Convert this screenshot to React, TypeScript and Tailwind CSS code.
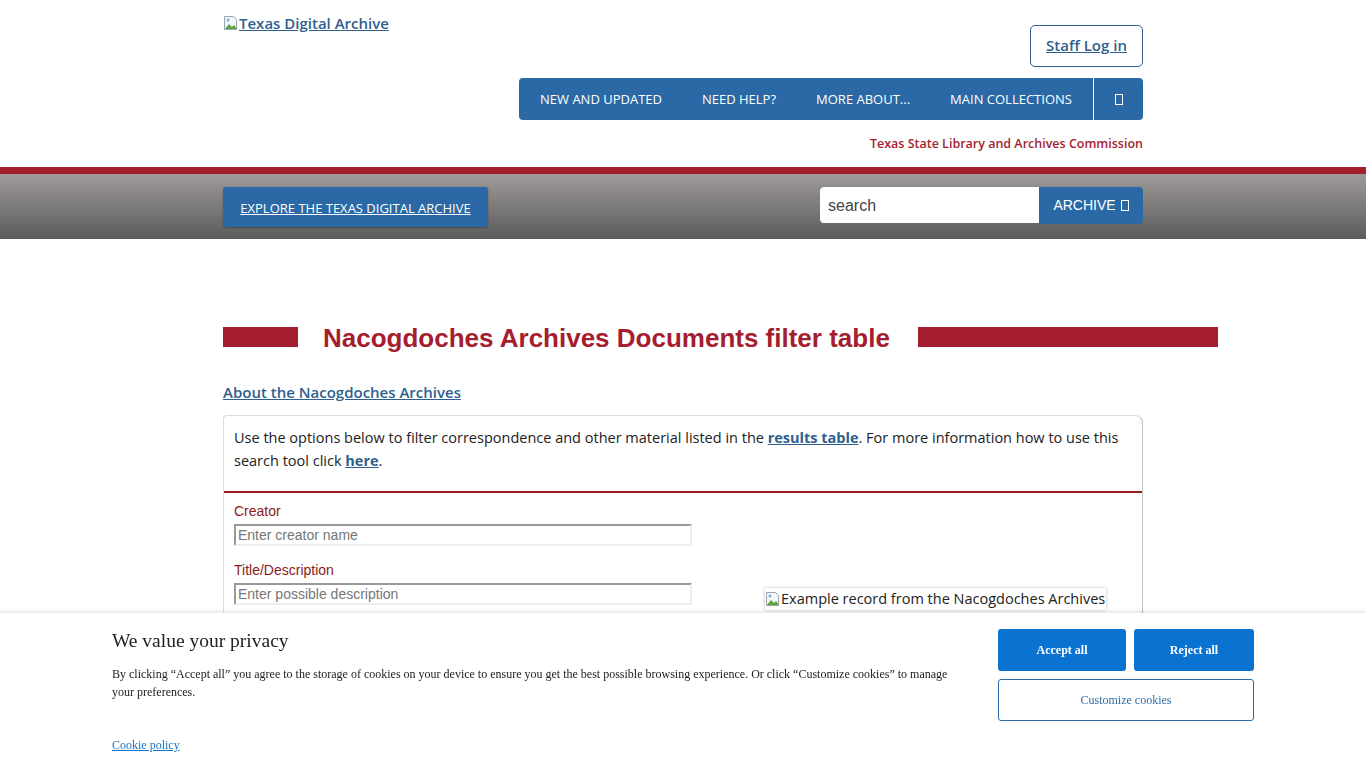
import React from "react";

const Tofu = ({ className = "" }: { className?: string }) => (
  <span className={`inline-block w-[8px] h-[11px] border border-white align-middle ${className}`} />
);

const BrokenImg = () => (
  <svg width="16" height="16" viewBox="0 0 16 16" className="inline-block align-[-2px] mr-[0px]">
    <path d="M1.5 1.5h9l3 3v10h-12z" fill="#f4f6f8" stroke="#9aa5b1" />
    <path d="M2 14l4-5 3 3 2-2 3 4z" fill="#5aa63c" />
    <circle cx="5" cy="5" r="1.5" fill="#7ab0e0" />
  </svg>
);

export default function App() {
  return (
    <div className="relative min-h-[768px] bg-white" style={{ fontFamily: '"Open Sans", "Noto Sans", sans-serif' }}>
      {/* Header */}
      <header className="w-[920px] mx-auto pt-[12px] h-[167px] flex justify-between">
        <div>
          <a href="#" className="text-[15px] font-semibold text-[#2e5f8e] underline leading-[22px] flex items-center">
            <BrokenImg />
            Texas Digital Archive
          </a>
        </div>
        <div className="flex flex-col items-end">
          <a href="#" className="mt-[13px] w-[113px] h-[42px] border border-[#2e5f8e] rounded-[5px] flex items-center justify-center pb-[2px] text-[15px] font-semibold text-[#2e5f8e] underline">
            Staff Log in
          </a>
          <nav className="mt-[11px] h-[42px] w-[624px] bg-[#2a69a5] rounded-[4px] flex items-center text-white text-[13px]">
            <a className="pl-[21px] pr-[20px] pt-[2px]">NEW AND UPDATED</a>
            <a className="px-[20px] pt-[2px]">NEED HELP?</a>
            <a className="px-[20px] pt-[2px]">MORE ABOUT...</a>
            <a className="px-[20px] pt-[2px]">MAIN COLLECTIONS</a>
            <div className="ml-auto w-[50px] h-full border-l border-white flex items-center justify-center">
              <Tofu />
            </div>
          </nav>
          <div className="mt-[15px] text-[12.5px] font-semibold text-[#a51e30]">Texas State Library and Archives Commission</div>
        </div>
      </header>

      {/* red band + gray bar */}
      <div className="h-[7px] bg-[#a51e30]" />
      <div className="h-[65px] bg-gradient-to-b from-[#a09a9a] to-[#5c5c5c]">
        <div className="w-[920px] mx-auto pt-[13px] flex justify-between">
          <a href="#" className="w-[265px] h-[40px] bg-[#2a69a5] rounded-[3px] flex items-center justify-center pt-[3px] text-white text-[13px] underline shadow-[0_1px_2px_rgba(0,0,0,0.3)]">
            EXPLORE THE TEXAS DIGITAL ARCHIVE
          </a>
          <div className="flex h-[37px] rounded-[4px] overflow-hidden">
            <input
              placeholder="search"
              className="w-[219px] h-[36px] bg-white px-[8px] pt-[2px] text-[16px] text-[#444] placeholder:text-[#444] outline-none rounded-l-[4px]"
              style={{ fontFamily: '"Liberation Sans", Arial, sans-serif' }}
            />
            <button
              className="w-[104px] h-[37px] bg-[#2a69a5] text-white text-[14px] flex items-center justify-center gap-[5px]"
              style={{ fontFamily: '"Liberation Sans", Arial, sans-serif' }}
            >
              ARCHIVE <Tofu />
            </button>
          </div>
        </div>
      </div>

      {/* Main */}
      <main className="w-[920px] mx-auto pt-[82px]">
        <div className="flex items-center w-[995px]">
          <div className="w-[75px] h-[20px] bg-[#a51e30]" />
          <h1
            className="px-[25px] pt-[2px] text-[26px] font-bold text-[#a51e30] leading-[30px] whitespace-nowrap"
            style={{ fontFamily: '"Liberation Sans", Arial, sans-serif' }}
          >
            Nacogdoches Archives Documents filter table
          </h1>
          <div className="ml-[3px] flex-1 h-[20px] bg-[#a51e30]" />
        </div>

        <a href="#" className="block mt-[28px] text-[15px] font-semibold text-[#2e5f8e] underline leading-[22px]">
          About the Nacogdoches Archives
        </a>

        <div className="mt-[12px] border border-[#dcdcdc] border-r-[#bdbdbd] rounded-tr-[8px] rounded-tl-[4px] h-[300px]">
          <p className="px-[10px] pt-[10px] pb-[19px] text-[14.5px] leading-[23px] text-[#222]">
            Use the options below to filter correspondence and other material listed in the{" "}
            <a href="#" className="font-bold text-[#2e5f8e] underline">results table</a>. For more information how to use this search tool click{" "}
            <a href="#" className="font-bold text-[#2e5f8e] underline">here</a>.
          </p>
          <div className="h-[2px] bg-[#9b1c22]" />
          <div className="flex px-[10px]" style={{ fontFamily: '"Liberation Sans", Arial, sans-serif' }}>
            <div className="w-[458px]">
              <label className="block mt-[9px] text-[14px] text-[#8b1a1a] leading-[18px]">Creator</label>
              <input
                placeholder="Enter creator name"
                className="mt-[4px] w-[458px] h-[22px] border-2 border-[#999] border-b-[#eee] border-r-[#eee] px-[2px] text-[14px] placeholder:text-[#777] outline-none"
              />
              <label className="block mt-[14px] text-[14px] text-[#8b1a1a] leading-[18px]">Title/Description</label>
              <input
                placeholder="Enter possible description"
                className="mt-[4px] w-[458px] h-[22px] border-2 border-[#999] border-b-[#eee] border-r-[#eee] px-[2px] text-[14px] placeholder:text-[#777] outline-none"
              />
            </div>
            <div className="ml-[73px] mt-[95px]">
              <div
                className="flex items-center h-[22px] bg-white shadow-[0_0_3px_rgba(0,0,0,0.25)] pr-[1px] text-[14.5px] text-[#222]"
                style={{ fontFamily: '"Open Sans", "Noto Sans", sans-serif' }}
              >
                <BrokenImg />
                Example record from the Nacogdoches Archives
              </div>
            </div>
          </div>
        </div>
      </main>

      {/* Cookie banner */}
      <div
        className="fixed left-0 right-0 bottom-0 h-[155px] bg-white shadow-[0_-1px_4px_rgba(0,0,0,0.15)]"
        style={{ fontFamily: '"Liberation Serif", "Times New Roman", serif' }}
      >
        <div className="flex px-[112px] pt-[16px]">
          <div className="flex-1 pr-[40px]">
            <h2 className="text-[19.5px] leading-[24px] text-[#222]">We value your privacy</h2>
            <p className="mt-[12px] text-[12px] leading-[18px] text-[#222]">
              By clicking “Accept all” you agree to the storage of cookies on your device to ensure you get the best possible browsing experience. Or click “Customize cookies” to manage your preferences.
            </p>
            <a href="#" className="block mt-[35px] text-[12px] text-[#1a74c8] underline">Cookie policy</a>
          </div>
          <div className="w-[256px] flex flex-col gap-[8px]">
            <div className="flex gap-[8px]">
              <button className="w-[128px] h-[42px] bg-[#0a73d2] text-white text-[12px] font-semibold rounded-[3px]">Accept all</button>
              <button className="w-[120px] h-[42px] bg-[#0a73d2] text-white text-[12px] font-semibold rounded-[3px]">Reject all</button>
            </div>
            <button className="w-[256px] h-[42px] border border-[#2e6da8] text-[#2e6da8] text-[12px] rounded-[3px] bg-white">Customize cookies</button>
          </div>
        </div>
      </div>
    </div>
  );
}
